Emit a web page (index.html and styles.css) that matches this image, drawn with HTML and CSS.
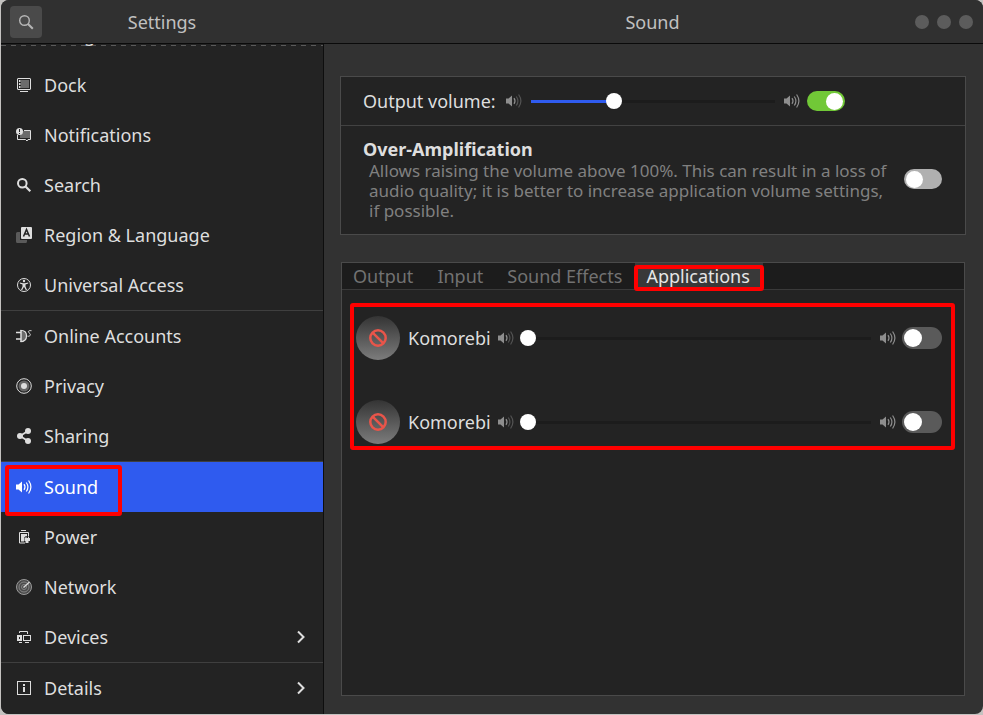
FILE: index.html
```html
<!DOCTYPE html>
<html lang="en">
<head>
<meta charset="utf-8">
<title>Settings</title>
<link rel="stylesheet" href="styles.css">
</head>
<body>
<svg class="defs" aria-hidden="true">
  <symbol id="speaker" viewBox="0 0 16 16">
    <path d="M0 5.500h2.500L6 2.500v11L2.500 10.500H0z" fill="currentColor"/>
  </symbol>
  <symbol id="speaker-low" viewBox="0 0 16 16">
    <use href="#speaker"/>
    <g fill="none" stroke="currentColor" stroke-width="1.200"><path d="M8 5.200q2 2.800 0 5.600"/><path d="M10.300 3.500q3.200 4.500 0 9" opacity=".45"/><path d="M12.600 1.500q4.600 6.500 0 13" opacity=".45"/></g>
  </symbol>
  <symbol id="speaker-high" viewBox="0 0 16 16">
    <use href="#speaker"/>
    <g fill="none" stroke="currentColor" stroke-width="1.200"><path d="M8 5.200q2 2.800 0 5.600"/><path d="M10.300 3.500q3.200 4.500 0 9"/><path d="M12.600 1.500q4.600 6.500 0 13"/></g>
  </symbol>
  <symbol id="chevron" viewBox="0 0 16 16">
    <path d="M5 2.500l5.500 5.500L5 13.500" fill="none" stroke="currentColor" stroke-width="2"/>
  </symbol>
  <symbol id="blocked" viewBox="0 0 20 20">
    <g fill="none" stroke="#e8554a" stroke-width="2.500"><circle cx="10" cy="10" r="7.700"/><path d="M4.600 4.600l10.800 10.800"/></g>
  </symbol>
</svg>
<div class="window">
  <header class="titlebar">
    <div class="title-left">
      <button class="search-button" aria-label="Search"><svg class="icon" viewBox="0 0 16 16"><circle cx="6.500" cy="6.500" r="4.800" fill="none" stroke="currentColor" stroke-width="1.400"/><path d="M10 10l4.800 4.800" stroke="currentColor" stroke-width="2"/></svg></button>
      <h1 class="title">Settings</h1>
    </div>
    <div class="title-right">
      <h2 class="title">Sound</h2>
      <div class="window-buttons"><button aria-label="Minimize"></button><button aria-label="Maximize"></button><button aria-label="Close"></button></div>
    </div>
  </header>
  <div class="content">
    <nav class="sidebar">
      <ul class="nav-list">
        <li><a href="#background"><span class="icon"></span>Background</a></li>
        <li><a href="#dock"><svg class="icon" viewBox="0 0 16 16"><rect x="1.500" y="1.500" width="13" height="11" rx=".5" fill="none" stroke="currentColor"/><path d="M5 3h8v8H5z" fill="#6b6b6b"/><path d="M3 3h1.500v2H3zM3 6h1.500v2H3zM3 9h1.500v2H3zM4 14h8v1H4z" fill="currentColor"/></svg>Dock</a></li>
        <li><a href="#notifications"><svg class="icon" viewBox="0 0 16 16"><path d="M7 4h7v7H4V8z" fill="#6b6b6b"/><path d="M8 3.500h6.500v9H12l-1 1.500-1.500-1.500h-8V8" fill="none" stroke="currentColor"/><circle cx="3.500" cy="4.500" r="3.500" fill="currentColor"/><path d="M3 2h1v3H3zM3 6h1v1H3z" fill="#232323"/></svg>Notifications</a></li>
        <li><a href="#search"><svg class="icon" viewBox="0 0 16 16"><circle cx="6.300" cy="6.300" r="4.300" fill="none" stroke="currentColor" stroke-width="2"/><path d="M9.500 9.500l4.800 4.800" stroke="currentColor" stroke-width="2.200"/></svg>Search</a></li>
        <li><a href="#region"><svg class="icon" viewBox="0 0 16 16"><path d="M4 5H1.500A1.500 1.500 0 0 0 0 6.500v8A1.500 1.500 0 0 0 1.500 16h8a1.500 1.500 0 0 0 1.500-1.500V13H4z" fill="#5a5a5a"/><rect x="5" width="11" height="12" rx="1" fill="currentColor"/><path d="M7.500 9.500l3-7 3 7M8.700 7h3.600" fill="none" stroke="#232323" stroke-width="1.500"/></svg>Region &amp; Language</a></li>
        <li><a href="#access"><svg class="icon" viewBox="0 0 16 16"><circle cx="8" cy="8" r="6.500" fill="none" stroke="currentColor"/><circle cx="8" cy="4" r="1.200" fill="currentColor"/><path d="M3.800 5.500L7 6.200h2l3.200-.7v1L9.500 7.400v2l1.500 3.500h-1.200L8 9.800 6.200 12.900H5l1.500-3.500v-2L3.800 6.500z" fill="currentColor"/></svg>Universal Access</a></li>
        <li class="divided"><a href="#accounts"><svg class="icon" viewBox="0 0 16 16"><path d="M5 3v10q5-1 5-5t-5-5z" fill="#6b6b6b"/><path d="M0 4.500h5M0 11h5M5 2v12" fill="none" stroke="currentColor" stroke-width="1.500"/><path d="M4.500 2.300c4 0 6 2.500 6 5.700s-2 5.700-6 5.700" fill="none" stroke="currentColor" stroke-width="1.300"/><path d="M15.500 2.700c-4-.5-3.500 1.500-2 2.500s1 3.500-2 3" fill="none" stroke="currentColor"/></svg>Online Accounts</a></li>
        <li><a href="#privacy"><svg class="icon" viewBox="0 0 16 16"><circle cx="8" cy="8" r="7.300" fill="#232323" stroke="currentColor"/><circle cx="8" cy="8" r="5.500" fill="#666"/><circle cx="8" cy="8" r="3" fill="currentColor"/></svg>Privacy</a></li>
        <li><a href="#sharing"><svg class="icon" viewBox="0 0 16 16"><path d="M12 3L4 8l8 5" fill="none" stroke="currentColor" stroke-width="1.800"/><circle cx="12" cy="3" r="3" fill="currentColor"/><circle cx="4" cy="8" r="3" fill="currentColor"/><circle cx="12" cy="13" r="3" fill="currentColor"/></svg>Sharing</a></li>
        <li class="divided selected"><a href="#sound" aria-current="page"><svg class="icon"><use href="#speaker-high"/></svg>Sound</a><span class="mark mark-nav"></span></li>
        <li><a href="#power"><svg class="icon" viewBox="0 0 16 16"><path d="M5 1h5v1H5z" fill="currentColor"/><path d="M12.500 7V3.500h-9v10.500H9" fill="none" stroke="currentColor"/><path d="M5 5h6v2H9.500L8 9v3.500H5z" fill="currentColor"/><path d="M9.500 7.500h1v1.500h1.500V7.500h1V9H14v3h-1.500v2h-3v-2H8.500V9h1z" fill="currentColor"/></svg>Power</a></li>
        <li><a href="#network"><svg class="icon" viewBox="0 0 16 16"><circle cx="8" cy="8" r="7.500" fill="#4b4b4b" stroke="#9a9a9a"/><g fill="none" stroke="#858585"><circle cx="8" cy="8" r="5"/><circle cx="8" cy="8" r="2.500"/></g><path d="M7.500 8.500L13.500 3" stroke="#ddd" stroke-width="1.400"/></svg>Network</a></li>
        <li><a href="#devices"><svg class="icon" viewBox="0 0 16 16"><path d="M3.500 4V2.500h8V5" fill="none" stroke="currentColor"/><path d="M1 6h5v6H1z" fill="currentColor"/><path d="M3 8h1v2H3z" fill="#232323"/><rect x="7.500" y="6.500" width="7" height="5" fill="#232323" stroke="currentColor"/><path d="M3 13h3v1H3zM9 13h4v1H9z" fill="currentColor"/></svg>Devices<svg class="icon arrow"><use href="#chevron"/></svg></a></li>
        <li class="divided"><a href="#details"><svg class="icon" viewBox="0 0 16 16"><rect x="1.500" y="1.500" width="13" height="13" fill="none" stroke="currentColor"/><path d="M7 4h2v2H7zM7 7h2v5H7z" fill="currentColor"/></svg>Details<svg class="icon arrow"><use href="#chevron"/></svg></a></li>
      </ul>
    </nav>
    <main class="main">
      <section class="panel">
        <div class="output-row">
          <label for="output">Output volume:</label>
          <svg class="icon dim"><use href="#speaker-low"/></svg>
          <input class="slider slider-output" id="output" type="range" min="0" max="100" value="33">
          <svg class="icon dim"><use href="#speaker-high"/></svg>
          <input class="switch" type="checkbox" aria-label="Output enabled" checked>
        </div>
        <div class="amplify-row">
          <div class="amplify-text">
            <label class="amplify-title" for="amplify">Over-Amplification</label>
            <p class="amplify-note">Allows raising the volume above 100%. This can result in a loss of<br>audio quality; it is better to increase application volume settings,<br>if possible.</p>
          </div>
          <input class="switch" id="amplify" type="checkbox">
        </div>
      </section>
      <section class="panel tabs-panel">
        <div class="tabs" role="tablist">
          <button role="tab">Output</button>
          <button role="tab">Input</button>
          <button role="tab">Sound Effects</button>
          <button role="tab" class="active" aria-selected="true">Applications<span class="mark mark-tab"></span></button>
        </div>
        <div class="apps">
          <div class="app-row">
            <span class="app-icon"><svg><use href="#blocked"/></svg></span>
            <label for="app1">Komorebi</label>
            <svg class="icon dim"><use href="#speaker-low"/></svg>
            <input class="slider" id="app1" type="range" min="0" max="100" value="0">
            <svg class="icon dim"><use href="#speaker-high"/></svg>
            <input class="switch switch-app" type="checkbox" aria-label="Komorebi enabled">
          </div>
          <div class="app-row">
            <span class="app-icon"><svg><use href="#blocked"/></svg></span>
            <label for="app2">Komorebi</label>
            <svg class="icon dim"><use href="#speaker-low"/></svg>
            <input class="slider" id="app2" type="range" min="0" max="100" value="0">
            <svg class="icon dim"><use href="#speaker-high"/></svg>
            <input class="switch switch-app" type="checkbox" aria-label="Komorebi enabled">
          </div>
          <span class="mark mark-apps"></span>
        </div>
      </section>
    </main>
  </div>
</div>
</body>
</html>
```
FILE: styles.css
```css
* { box-sizing: border-box; }

body {
  margin: 0;
  padding: 0 0 1px 1px;
  height: 100vh;
  overflow: hidden;
  background: #c4c2c0;
  color: #dedede;
  font: 18px/24px "Noto Sans", sans-serif;
}

button { margin: 0; padding: 0; border: 0; font: inherit; color: inherit; }
a { color: inherit; text-decoration: none; }
.defs { position: absolute; width: 0; height: 0; }
.icon { flex: none; width: 16px; height: 16px; }
.dim { color: #8e8e8e; }

.window {
  display: flex;
  flex-direction: column;
  height: 100%;
  border-radius: 8px;
  overflow: hidden;
  background: #323232;
}

/* Title bar */
.titlebar {
  display: flex;
  flex: none;
  height: 44px;
  border-bottom: 1px solid #0a0a0a;
  background: #303030;
}
.title { flex: 1; margin: 0; font-size: 18px; font-weight: 400; text-align: center; color: #c0c0c0; }
.title-left { display: flex; align-items: center; width: 323px; padding: 0 42px 0 9px; }
.title-right { display: flex; flex: 1; align-items: center; padding: 0 10px 0 66px; }
.search-button {
  display: grid;
  place-items: center;
  width: 32px;
  height: 32px;
  border-radius: 4px;
  background: #4a4a4a;
  color: #b5b5b5;
}
.window-buttons { display: flex; gap: 8px; }
.window-buttons button { width: 14px; height: 14px; border-radius: 50%; background: #5c5c5c; }

.content { display: flex; flex: 1; min-height: 0; }

/* Sidebar */
.sidebar {
  position: relative;
  flex: none;
  width: 323px;
  overflow: hidden;
  border-right: 1px solid #0e0e0e;
  background: #232323;
}
.sidebar::before {
  content: "";
  position: absolute;
  top: 1px;
  left: 0;
  right: 0;
  height: 1px;
  background: repeating-linear-gradient(90deg, #5a5a5a 0 5px, transparent 5px 10px);
}
.nav-list { margin: -34px 0 0; padding: 0; list-style: none; }
.nav-list li { position: relative; }
.nav-list a { display: flex; align-items: center; gap: 12px; height: 50px; padding: 0 14px 0 15px; }
.nav-list .divided { border-top: 1px solid #3f3f3f; }
.nav-list .selected { background: #2f5bef; color: #fff; }
.nav-list .arrow { margin-left: auto; }

/* Main area */
.main { display: flex; flex: 1; flex-direction: column; gap: 27px; min-width: 0; padding: 32px 17px 18px 16px; }
.panel { border: 1px solid #4a4a4a; background: #232323; }
.output-row {
  display: grid;
  grid-template-columns: 143px 16px minmax(0, 1fr) 16px 45px;
  align-items: center;
  height: 49px;
  padding: 0 120px 0 22px;
  border-bottom: 1px solid #424242;
}
.output-row .slider { margin: 0 9px; }
.output-row .switch { justify-self: end; }
.amplify-row {
  display: flex;
  align-items: center;
  justify-content: space-between;
  height: 108px;
  padding: 0 23px 2px 22px;
}
.amplify-title { font-weight: 700; }
.amplify-note { margin: 0; padding-left: 6px; font-size: 17px; line-height: 20px; white-space: nowrap; color: #808080; }

/* Sliders */
.slider {
  appearance: none;
  min-width: 0;
  height: 16px;
  margin: 0;
  background: linear-gradient(#1c1c1c, #1c1c1c) center / 100% 3px no-repeat;
}
.slider::-webkit-slider-thumb { appearance: none; width: 16px; height: 16px; border-radius: 50%; background: #fff; }
.slider-output { background-image: linear-gradient(90deg, #2f5bef 34%, #1c1c1c 34%); }

/* Switches */
.switch {
  appearance: none;
  display: flex;
  flex: none;
  align-items: center;
  width: 38px;
  height: 20px;
  margin: 0;
  padding: 0 2px;
  border-radius: 11px;
  background: #b0b0b0;
}
.switch::before { content: ""; width: 17px; height: 17px; border-radius: 50%; background: #fff; }
.switch:checked { justify-content: flex-end; background: #71c837; }
.switch-app { width: 40px; height: 22px; background: #5a5a5a; }
.switch-app::before { width: 18px; height: 18px; }

/* Tabs */
.tabs-panel { display: flex; flex: 1; flex-direction: column; margin: 0 1px; }
.tabs { display: flex; height: 27px; border-bottom: 1px solid #3a3a3a; background: #1c1c1c; }
.tabs button { position: relative; padding: 0 13px 0 11px; background: none; line-height: 26px; color: #727272; }
.tabs .active { background: #393939; color: #e6e6e6; }

.apps { position: relative; display: flex; flex-direction: column; gap: 40px; padding: 26px 22px 6px 14px; }
.app-row {
  display: grid;
  grid-template-columns: 44px 98px 16px minmax(0, 1fr) 16px 46px;
  align-items: center;
  height: 44px;
}
.app-row label { padding-left: 8px; }
.app-row .slider { margin: 0 9px 0 6px; }
.app-row .switch { justify-self: end; }
.app-icon {
  display: grid;
  place-items: center;
  width: 44px;
  height: 44px;
  border-radius: 50%;
  background: linear-gradient(#343434, #7c7c7c);
}
.app-icon svg { width: 20px; height: 20px; }

/* Highlight frames */
.mark { position: absolute; border: 4px solid #f00; border-radius: 3px; pointer-events: none; }
.mark-nav { top: 3px; left: 4px; width: 117px; height: 51px; z-index: 1; }
.mark-tab { inset: 2px -1px -2px; }
.mark-apps { inset: 13px 9px 0 8px; }
```
